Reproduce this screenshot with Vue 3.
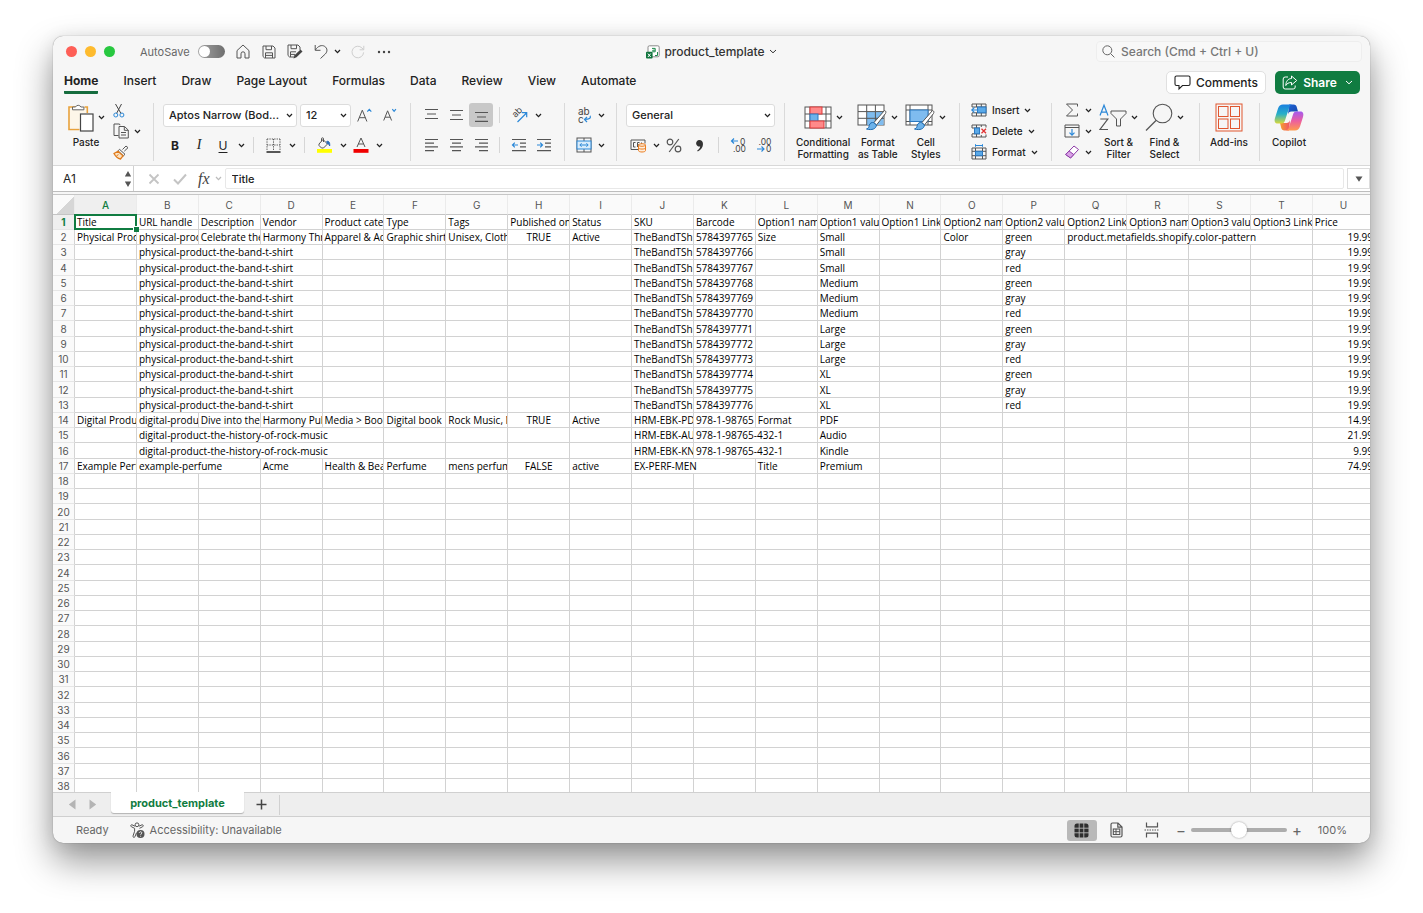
<script setup>
import { h, ref } from 'vue'

const glyphs = {
  home: [14, 15, '<path d="M1 6.6 7 1l6 5.6V14H9V9.8a2 2 0 0 0-4 0V14H1Z"/>'],
  save: [14, 14, '<path d="M1 1h10l2 2v10H2.6L1 11.5Z M4 1v3.7h5.5V1 M3.5 13V7.8h7V13 M3.5 10.4h7"/>'],
  saveAs: [16, 15, '<path d="M1 1h10l2 2v3 M7 13H2.6L1 11.5V1 M4 1v3.7h5.5V1 M3.5 13V7.8h5.5 M3.5 10.4H8"/><path d="m6.5 14.5 1-3.2 6-5.8 2 2-6 5.8Z" fill="#444" stroke="none"/>'],
  undo: [14, 15, '<path d="M1.2 1v5.3h5.3 M1.4 6C4 1.8 8 .6 10.7 2.4c3 2 2.8 5.4.6 7.6L6.5 14.5"/>'],
  redo: [14, 14, '<path d="M12.6 7.4A5.8 5.8 0 1 1 11 3l1.6 1.6 M12.8.8v4H8.6" stroke="#cfcfcf"/>'],
  dots: [14, 4, '<g fill="#444" stroke="none"><circle cx="2" cy="2" r="1.2"/><circle cx="7" cy="2" r="1.2"/><circle cx="12" cy="2" r="1.2"/></g>'],
  chev: [7, 5, '<path d="m1 1 2.5 2.6L6 1" stroke="currentColor" stroke-width="1.3"/>'],
  chevWide: [8, 5, '<path d="m1 1 3 2.8L7 1" stroke="currentColor"/>'],
  file: [14, 14, '<rect x="2" y=".8" width="11.2" height="11" rx="1.4" stroke="#8a8a8a" fill="#fff"/><path d="M6 3.400h3.200v3.400H6.800V5.200h2.400 M11.500 7v3.500H9" stroke="#1e8a4c"/><rect x="0" y="6.8" width="6.6" height="6.8" rx="1" fill="#10743d" stroke="none"/><path d="m1.9 8.6 2.8 3.4m0-3.4-2.8 3.4" stroke="#fff"/>'],
  search: [13, 13, '<circle cx="5.3" cy="5.3" r="4.5" stroke="#666"/><path d="m8.6 8.6 3.8 3.8" stroke="#666"/>'],
  comment: [17, 15, '<path d="M2.5 1h12A1.5 1.5 0 0 1 16 2.5v6.5a1.5 1.5 0 0 1-1.5 1.5H8.500L5 14v-3.5H2.500A1.5 1.5 0 0 1 1 9V2.500A1.5 1.5 0 0 1 2.500 1Z" stroke="#222" stroke-width="1.1"/>'],
  share: [16, 15, '<path d="M6 2H3.200A2 2 0 0 0 1.200 4v8a2 2 0 0 0 2 2h8a2 2 0 0 0 2-2v-1.500 M9.500 1l5.200 4.500L9.500 10V7.500C6.500 7.500 5 8.500 3.800 10.500 4 6 6 3.700 9.500 3.500Z" stroke="#fff"/>'],
  paste: [27, 29, '<path d="M9 4H2v22.500h10.500 M17.500 4h2.800v6" stroke="#e9a23b" stroke-width="1.6"/><path d="M3 5.200h16v5h-6v15H3z" fill="#fdf6e9" stroke="none"/><path d="M5.500 6.800V4h3a3 3 0 0 1 5.400 0h3v2.800Z" fill="#fff" stroke="#666"/><rect x="13.500" y="11" width="12.500" height="17" fill="#fff" stroke="#444" stroke-width="1.200"/>'],
  cut: [12, 15, '<path d="M2.500 1 8 10.500 M8.500 1 3.500 10.500" stroke="#444"/><circle cx="2.800" cy="12" r="2" stroke="#2b88d8"/><circle cx="8.900" cy="12" r="2" stroke="#2b88d8"/>'],
  copy: [16, 16, '<path d="M5.500 12.500H1V1h5.500l.5 1.200" /><path d="M6 3.500h5.500l3.800 3.600V15H6Z M11.300 3.700V7.300h3.800 M8 9.500h5 M8 12h5"/>'],
  brush: [16, 15, '<path d="M9.500 4.500 13 1l2 1.700-3.700 3.500 M6.500 4.300l5.500 5-1.600 1.500-5.400-5Z" /><path d="M5 6.200 1 8.500c1.500 2.800 4 5 6.500 5.500L10 10.800Z" fill="#fbe3c4" stroke="#e07b1c" stroke-width="1.300"/><path d="m3.500 10.800 2-1.200" stroke="#e07b1c"/>'],
  fontUp: [15, 15, '<path d="M.7 13.500 5.300 2.200l4.600 11.300M2.300 9.700h6"/><path d="m10.300 3.600 2-2.300 2 2.300" stroke="#2b88d8" stroke-width="1.200"/>'],
  fontDown: [14, 14, '<path d="M.7 12.500 4.600 2.800l4 9.700M2.100 9.200h5"/><path d="m9.300 1.200 1.800 2.200 1.800-2.200" stroke="#2b88d8" stroke-width="1.200"/>'],
  borders: [15, 15, '<path d="M1 1h13M1 1v12M14 1v12M7.500 1v12M1 7h13" stroke-dasharray="1.300 1.100"/><path d="M.5 14h14" stroke="#222" stroke-width="1.500"/>'],
  fill: [17, 16, '<path d="m7 2.500 4.500 4.500-4 4H5.500L3 8.500v-1.500Z M7.500 5V1.800a1 1 0 0 0-2 0v2.500"/><path d="M10.500 4.500c2.200-.8 3.500.5 3.200 4.500-.8-2-1.700-2.800-3-2.500" fill="#2b6cb8" stroke="#2b6cb8"/><rect x="1" y="12" width="15" height="3.800" fill="#ffff00" stroke="none"/>'],
  fontColor: [16, 16, '<path d="M4 10 8 1l4 9M5.300 7h5.300"/><rect x=".5" y="12" width="15" height="3.800" fill="#f00000" stroke="none"/>'],
  vTop: [15, 14, '<path d="M1 1.500h13M3 6h9M1 10.500h13" stroke-width="1.200"/>'],
  vMid: [15, 14, '<path d="M1 2.500h13M3 7h9M1 11.500h13" stroke-width="1.200"/>'],
  vBot: [15, 14, '<path d="M1 4.500h13M3 9h9M1 13.400h13" stroke-width="1.200"/>'],
  aLeft: [15, 14, '<path d="M1 1.500h13M1 5.200h9M1 8.900h13M1 12.600h9" stroke-width="1.200"/>'],
  aMid: [15, 14, '<path d="M1 1.500h13M3 5.200h9M1 8.900h13M3 12.600h9" stroke-width="1.200"/>'],
  aRight: [15, 14, '<path d="M1 1.500h13M5 5.200h9M1 8.900h13M5 12.600h9" stroke-width="1.200"/>'],
  orient: [17, 16, '<text transform="translate(4.500 11) rotate(-45)" font-size="9" stroke="none" fill="#444">ab</text><path d="M6.500 15 15.500 6M11 5.600h4.700v4.600" stroke="#2b88d8" stroke-width="1.200"/>'],
  outdent: [16, 14, '<path d="M1 1.500h14M9 5.200h6M9 8.900h6M1 12.600h14" stroke-width="1.200"/><path d="M7 7H1.500M3.800 4.700 1.500 7l2.300 2.300" stroke="#2b88d8" stroke-width="1.200"/>'],
  indent: [16, 14, '<path d="M1 1.500h14M9 5.200h6M9 8.900h6M1 12.600h14" stroke-width="1.200"/><path d="M1 7h5.500M4.200 4.700 6.500 7 4.200 9.300" stroke="#2b88d8" stroke-width="1.200"/>'],
  wrap: [15, 17, '<text x="1" y="8" font-size="10" stroke="none" fill="#444">ab</text><text x="1" y="15.500" font-size="10" stroke="none" fill="#444">c</text><path d="M13.200 8.800c.8 2.500-1 3.700-5.500 3.700M10 10l-2.500 2.500L10 15" stroke="#2b88d8" stroke-width="1.200"/>'],
  merge: [16, 16, '<rect x="1" y="1" width="14" height="14"/><path d="M8 1v3M8 12v3"/><rect x="1" y="4" width="14" height="8" fill="#d9ecfb" stroke="#2b88d8"/><path d="M4 8h8M5.600 6.200 3.800 8l1.800 1.800M10.400 6.200 12.200 8l-1.800 1.800" stroke="#2b88d8"/>'],
  currency: [17, 15, '<path d="M8 11.500H1V2h14v3.500"/><path d="M5.500 4.500H3.500v4.500h2M9.500 4.500H7.500v4.500M7 6.700h2.500M11.500 4.500v1.500"/><path d="M8.500 7v5.500c0 2 7 2 7 0V7" fill="#fdeedd" stroke="#ec7d20"/><ellipse cx="12" cy="7" rx="3.500" ry="1.300" fill="#fdeedd" stroke="#ec7d20"/><path d="M8.500 9.800c0 1.700 7 1.700 7 0" stroke="#ec7d20"/>'],
  percent: [16, 15, '<circle cx="4" cy="4" r="2.800" stroke-width="1.200"/><circle cx="12" cy="11" r="2.800" stroke-width="1.200"/><path d="M12.800 1 3.200 14" stroke-width="1.200"/>'],
  comma: [9, 13, '<path d="M4.300 1a3.300 3.300 0 1 0 .9 6.500C4.900 9.300 3.800 10.600 2.200 11.500l.6.900C6.200 10.900 8 8.300 8 5 8 2.500 6.400 1 4.300 1Z" fill="#333" stroke="none"/>'],
  moreDec: [17, 16, '<text x="10" y="7.500" font-size="8.500" stroke="none" fill="#444">0</text><text x="3" y="15" font-size="8.500" stroke="none" fill="#444">.00</text><path d="M8 4H1.500M4 1.500 1.500 4 4 6.500" stroke="#2b88d8" stroke-width="1.200"/>'],
  lessDec: [17, 16, '<text x="2.500" y="7.500" font-size="8.500" stroke="none" fill="#444">.00</text><text x="10" y="15" font-size="8.500" stroke="none" fill="#444">0</text><path d="M1 12h7M5.500 9.500 8 12l-2.500 2.500" stroke="#2b88d8" stroke-width="1.200"/>'],
  condFmt: [28, 23, '<rect x="1" y="1" width="26" height="21" fill="#fff"/><path d="M1 8h26M1 15h26M6 1v21M22 1v21"/><rect x="6" y="1" width="12" height="7" fill="#ff8a8a" stroke="#e03a3a"/><rect x="6" y="8" width="8" height="7" fill="#6cb2ea" stroke="#2b78c0"/><rect x="6" y="15" width="14" height="7" fill="#ff8a8a" stroke="#e03a3a"/>'],
  fmtTable: [30, 28, '<rect x="1" y="2" width="26" height="20" fill="#fff"/><rect x="10" y="9" width="16.500" height="13" fill="#7fbcef" stroke="none"/><path d="M1 8.600h26M1 15.300h26M9.700 2v20M18.400 2v20"/><path d="M27.500 7.500c1.500.5 1.700 1.700 1 3L19.500 22l-2.700-2.300Z" fill="#fff" /><path d="M16.800 19.700 19.500 22c-.5 4-4.500 5.500-10 4 2.200-.8 2.400-2 2.700-3.500.5-2.500 2.700-3.500 4.600-2.800Z" fill="#6cb2ea" stroke="#1b69b0"/>'],
  cellStyles: [30, 28, '<rect x="1" y="2" width="26" height="20" fill="#fff"/><path d="M1 7h26M1 18.500h26M5 2v20M23 2v20"/><rect x="5" y="7" width="18" height="11.500" fill="#7fbcef" stroke="#2b78c0"/><path d="M27.500 7.500c1.500.5 1.700 1.700 1 3L19.500 22l-2.700-2.300Z" fill="#fff"/><path d="M16.800 19.700 19.500 22c-.5 4-4.500 5.500-10 4 2.200-.8 2.400-2 2.700-3.500.5-2.500 2.700-3.500 4.600-2.800Z" fill="#6cb2ea" stroke="#1b69b0"/>'],
  insert: [16, 14, '<path d="M1 4V1h14v12H1v-3M1 4h14M1 9.800h14M5.500 1v3M10.300 1v3M5.500 10v3M10.300 10v3"/><rect x="6.500" y="4" width="8.500" height="5.800" fill="#5aa9e8" stroke="#2b78c0"/><path d="M7.500 7H.8M3.500 4.300.8 7l2.700 2.700" stroke="#2b88d8" stroke-width="1.200"/>'],
  delete: [16, 14, '<path d="M1 4V1h14v2.500M1 10v3h14v-2.500M1 4h8M1 9.800h8M5.500 1v3M10.300 1v2M5.500 10v3M10.300 11v2"/><rect x="3.500" y="4" width="5" height="5.800" fill="#5aa9e8" stroke="#2b78c0"/><path d="m10.500 4.800 4.500 4.500m0-4.500-4.500 4.500" stroke="#e03131" stroke-width="1.300"/>'],
  format: [16, 16, '<path d="M1 4h14v11H1ZM4.500 4v11M11.500 4v11M1 7.300h14M1 11.700h14"/><rect x="4.500" y="7.300" width="7" height="4.400" fill="#5aa9e8" stroke="#2b78c0"/><path d="M4.500 1.500h7M4.500.2v2.600M11.500.2v2.600" stroke="#2b88d8"/>'],
  sigma: [14, 14, '<path d="M12.500 3.500V1H1.500L7.500 7l-6 6h11v-2.500"/>'],
  fillDown: [16, 14, '<path d="M1 1h14v12H1ZM1 3.500h14"/><path d="M8 5v6M5.500 8.700 8 11.200l2.500-2.500" stroke="#2b88d8" stroke-width="1.200"/>'],
  eraser: [15, 14, '<path d="m9.500 1 4.500 3.500L6 13 1.200 9.500Z" fill="#fff" stroke="#8e3aa8"/><path d="M4.600 6 9.300 9.600 6 13 1.200 9.500Z" fill="#d9a3e6" stroke="#8e3aa8"/>'],
  sort: [28, 27, '<path d="M1 11.500 5 1.200l4 10.300M2.300 8.200h5.300" stroke="#2b88d8" stroke-width="1.200"/><path d="M1.300 15h7.500L1 25.500h8" stroke-width="1.200"/><path d="M12 7h15v2.500L21.500 15v7h-4v-7L12 9.500Z" />'],
  find: [28, 28, '<circle cx="17.500" cy="10.500" r="9.300" stroke-width="1.100"/><path d="M11 17.500 1 27.500" stroke-width="1.200"/>'],
  addins: [28, 29, '<g stroke="#e0562f"><rect x="1" y="1" width="26" height="27"/><rect x="3.500" y="3.500" width="9.500" height="10"/><rect x="15.500" y="3.500" width="9" height="10"/><rect x="3.500" y="16" width="9.500" height="9.500"/><rect x="15.500" y="16" width="9" height="9.500"/></g>'],
  copilot: [30, 27, `<defs>
    <linearGradient id="cpA" x1="0" y1="0" x2="0" y2="1"><stop offset="0" stop-color="#1a7fe0"/><stop offset=".5" stop-color="#27b0c8"/><stop offset="1" stop-color="#d8d83a"/></linearGradient>
    <linearGradient id="cpB" x1="0" y1="0" x2="0" y2="1"><stop offset="0" stop-color="#a45af0"/><stop offset=".5" stop-color="#ec5f9f"/><stop offset="1" stop-color="#ff9a4d"/></linearGradient>
    <linearGradient id="cpC" x1="0" y1="0" x2="1" y2="1"><stop offset="0" stop-color="#1f63d6"/><stop offset="1" stop-color="#1546a8"/></linearGradient>
    <linearGradient id="cpD" x1="0" y1="0" x2="1" y2="0"><stop offset="0" stop-color="#f5a12c"/><stop offset="1" stop-color="#f0506a"/></linearGradient></defs>
    <g stroke="none"><path d="M15 .5h4.500c2 0 2.800 1 3.300 2.800L24 7.500h-6.500c-2 0-3 1-3.500 3Z" fill="url(#cpC)"/><path d="M15 26.500h-4.500c-2 0-2.800-1-3.300-2.800L6 19h6.500c2 0 3-1 3.500-3Z" fill="url(#cpD)"/><path d="M9 .5h9c-1.500.4-2.200 1.300-2.800 3L11 16.500c-.6 2-1.500 3-3.500 3H3.800C1 19.500 0 17.500 1 14L4 4.500C4.900 1.800 6.500.5 9 .5Z" fill="url(#cpA)"/><path d="M21 26.500h-9c1.500-.4 2.200-1.300 2.800-3L19 10.500c.6-2 1.500-3 3.500-3h3.700c2.800 0 3.800 2 2.800 5.500l-3 9.500c-.9 2.700-2.500 4-5 4Z" fill="url(#cpB)"/></g>`],
  spin: [8, 18, '<path d="M4 1 7.200 6.500H.8ZM4 17 .8 11.500h6.400Z" fill="#555" stroke="none"/>'],
  cross: [12, 12, '<path d="m1.500 1.500 9 9m0-9-9 9" stroke="#c4c4c4" stroke-width="1.800"/>'],
  check: [14, 12, '<path d="m1 6.500 4 4L13 1.500" stroke="#c4c4c4" stroke-width="2"/>'],
  down: [8, 6, '<path d="M.5.500h7L4 5.800Z" fill="#555" stroke="none"/>'],
  left: [8, 11, '<path d="M7.500.5v10L.8 5.500Z" fill="#b4b4b4" stroke="none"/>'],
  right: [8, 11, '<path d="M.5.500v10l6.700-5Z" fill="#b4b4b4" stroke="none"/>'],
  plus: [11, 11, '<path d="M5.500 .5v10M.5 5.500h10" stroke="#444" stroke-width="1.500"/>'],
  access: [15, 17, '<circle cx="7" cy="2.800" r="1.900"/><path d="M5 4.200 2 2.800c-1.200-.3-1.800 1.300-.7 1.900L4.600 6.300v3L3 14c-.3 1.400 1.300 1.900 1.900.8l1.600-4M9 4.200l3-1.400c1.200-.3 1.800 1.300.7 1.900L9.500 6.300"/><circle cx="10.500" cy="12" r="4" fill="#555" stroke="none"/><path d="M9.300 11c0-1.700 2.600-1.600 2.500 0 0 .8-1.200.9-1.200 1.800M10.600 13.800v.8" stroke="#fff" stroke-width=".9"/>'],
  gridView: [15, 15, '<rect x=".5" y=".5" width="14" height="14" rx="2.500" fill="#2e2e2e" stroke="none"/><path d="M5.200 0v15M9.800 0v15M0 5.200h15M0 9.800h15" stroke="#b8b8b8" stroke-width=".9"/>'],
  pageView: [13, 16, '<path d="M1 2.500A1.500 1.500 0 0 1 2.500 1H8l4 4v8.500a1.500 1.500 0 0 1-1.500 1.500h-8A1.500 1.500 0 0 1 1 13.500ZM7.800 1v4.200H12" stroke-width="1.200"/><rect x="3.300" y="7" width="6.500" height="5.500" stroke-width="1.100"/><path d="M3.300 9.700h6.500M6 7v5.500"/>'],
  breakView: [16, 16, '<path d="M2.500.5v4.300h11V.5M2.500 15.500v-4.300h11v4.300" stroke-width="1.200"/><path d="M.5 8h15" stroke-dasharray="1.500 1"/>'],
}

const Ico = (props) => {
  const [w, ht, body] = glyphs[props.n]
  return h('svg', {
    width: w, height: ht, viewBox: `0 0 ${w} ${ht}`, fill: 'none', stroke: '#555',
    'aria-hidden': 'true', innerHTML: body,
  })
}
Ico.props = ['n']

const tabs = ['Home', 'Insert', 'Draw', 'Page Layout', 'Formulas', 'Data', 'Review', 'View', 'Automate']
const zoom = ref(50)
const cellName = ref('A1')
const formula = ref('Title')
const columns = 'ABCDEFGHIJKLMNOPQRSTU'.split('')

const shirt = 'physical-product-the-band-t-shirt'
const ebook = 'digital-product-the-history-of-rock-music'
const isbn = '978-1-98765-432-1'
const sizes = ['Small', 'Small', 'Small', 'Medium', 'Medium', 'Medium', 'Large', 'Large', 'Large', 'XL', 'XL', 'XL']
const colors = ['green', 'gray', 'red']

const data = {
  1: {
    A: 'Title', B: 'URL handle', C: 'Description', D: 'Vendor', E: 'Product cate', F: 'Type', G: 'Tags',
    H: 'Published on', I: 'Status', J: 'SKU', K: 'Barcode', L: 'Option1 nam', M: 'Option1 value',
    N: 'Option1 Linke', O: 'Option2 nam', P: 'Option2 value', Q: 'Option2 Linke', R: 'Option3 nam',
    S: 'Option3 value', T: 'Option3 Linke', U: 'Price',
  },
}
sizes.forEach((size, i) => {
  data[i + 2] = { B: shirt, J: 'TheBandTShi', K: String(5784397765 + i), M: size, P: colors[i % 3], U: '19.99' }
})
Object.assign(data[2], {
  A: 'Physical Prod', B: 'physical-prod', C: 'Celebrate the', D: 'Harmony Thre', E: 'Apparel & Acc', F: 'Graphic shirt',
  G: 'Unisex, Cloth', H: 'TRUE', I: 'Active', L: 'Size', O: 'Color', Q: 'product.metafields.shopify.color-pattern',
})
data[14] = {
  A: 'Digital Produ', B: 'digital-produc', C: 'Dive into the', D: 'Harmony Pub', E: 'Media > Book', F: 'Digital book',
  G: 'Rock Music, M', H: 'TRUE', I: 'Active', J: 'HRM-EBK-PD', K: '978-1-98765', L: 'Format', M: 'PDF', U: '14.99',
}
data[15] = { B: ebook, J: 'HRM-EBK-AU', K: isbn, M: 'Audio', U: '21.99' }
data[16] = { B: ebook, J: 'HRM-EBK-KN', K: isbn, M: 'Kindle', U: '9.99' }
data[17] = {
  A: 'Example Perf', B: 'example-perfume', D: 'Acme', E: 'Health & Bea', F: 'Perfume', G: 'mens perfum',
  H: 'FALSE', I: 'active', J: 'EX-PERF-MEN', L: 'Title', M: 'Premium', U: '74.99',
}

// Long text runs over the empty cells to its right.
const reach = { [shirt]: 3, [ebook]: 4, 'example-perfume': 2, 'EX-PERF-MEN': 2, [isbn]: 2, 'product.metafields.shopify.color-pattern': 4 }

const rows = Array.from({ length: 38 }, (_, i) => {
  const src = data[i + 1] || {}
  const cells = []
  for (let c = 0; c < columns.length;) {
    const text = src[columns[c]] || ''
    let span = 1
    while (span < (reach[text] || 1) && !src[columns[c + span]]) span++
    cells.push({ col: columns[c], text, span })
    c += span
  }
  return { n: i + 1, cells }
})
</script>

<template>
  <main class="desk">
    <div class="window">
      <header class="titlebar">
        <div class="quick">
          <span class="light red"></span><span class="light amber"></span><span class="light green"></span>
          <label class="autosave">AutoSave<input type="checkbox" role="switch" class="switch"></label>
          <button class="slot" aria-label="Home"><Ico n="home" /></button>
          <button class="slot" aria-label="Save"><Ico n="save" /></button>
          <button class="slot" aria-label="Save as"><Ico n="saveAs" /></button>
          <button class="slot" aria-label="Undo"><Ico n="undo" /></button>
          <button class="slot tiny" aria-label="Undo list"><Ico n="chev" /></button>
          <button class="slot" aria-label="Redo"><Ico n="redo" /></button>
          <button class="slot" aria-label="More"><Ico n="dots" /></button>
        </div>
        <button class="doc"><Ico n="file" /><span>product_template</span><Ico n="chevWide" /></button>
        <label class="search"><Ico n="search" /><input type="search" placeholder="Search (Cmd + Ctrl + U)" aria-label="Search"></label>
      </header>

      <div class="tabrow">
        <nav class="tabs">
          <button v-for="t in tabs" :key="t" class="tab" :class="{ on: t === 'Home' }">{{ t }}</button>
        </nav>
        <button class="pill comments"><Ico n="comment" />Comments</button>
        <button class="pill share"><Ico n="share" />Share<Ico n="chevWide" /></button>
      </div>

      <section class="ribbon">
        <div class="group clip">
          <button class="big"><span class="top"><Ico n="paste" /><Ico n="chev" /></span>Paste</button>
          <div class="stack">
            <button aria-label="Cut"><Ico n="cut" /></button>
            <button aria-label="Copy"><Ico n="copy" /><Ico n="chev" /></button>
            <button aria-label="Format painter"><Ico n="brush" /></button>
          </div>
        </div>

        <div class="group font">
          <div class="line">
            <span class="pick family"><select aria-label="Font"><option>Aptos Narrow (Bod...</option></select><Ico n="chev" /></span>
            <span class="pick size"><select aria-label="Font size"><option>12</option></select><Ico n="chev" /></span>
            <button class="w26" aria-label="Grow font"><Ico n="fontUp" /></button>
            <button class="w26" aria-label="Shrink font"><Ico n="fontDown" /></button>
          </div>
          <div class="line">
            <button class="w24 b">B</button>
            <button class="w24 i">I</button>
            <button class="w24 u">U</button>
            <button class="w12" aria-label="Underline styles"><Ico n="chev" /></button>
            <i class="rule"></i>
            <button class="w26" aria-label="Borders"><Ico n="borders" /></button>
            <button class="w12" aria-label="Border styles"><Ico n="chev" /></button>
            <i class="rule"></i>
            <button class="w26" aria-label="Fill colour"><Ico n="fill" /></button>
            <button class="w12" aria-label="Fill colours"><Ico n="chev" /></button>
            <button class="w24" aria-label="Font colour"><Ico n="fontColor" /></button>
            <button class="w12" aria-label="Font colours"><Ico n="chev" /></button>
          </div>
        </div>

        <div class="group align">
          <div class="line">
            <button class="w24" aria-label="Top align"><Ico n="vTop" /></button>
            <button class="w26" aria-label="Middle align"><Ico n="vMid" /></button>
            <button class="w24 pressed" aria-label="Bottom align"><Ico n="vBot" /></button>
            <i class="rule"></i>
            <button class="w26" aria-label="Orientation"><Ico n="orient" /></button>
            <button class="w12" aria-label="Orientations"><Ico n="chev" /></button>
          </div>
          <div class="line">
            <button class="w24" aria-label="Align left"><Ico n="aLeft" /></button>
            <button class="w26" aria-label="Centre"><Ico n="aMid" /></button>
            <button class="w24" aria-label="Align right"><Ico n="aRight" /></button>
            <i class="rule"></i>
            <button class="w26" aria-label="Decrease indent"><Ico n="outdent" /></button>
            <button class="w24" aria-label="Increase indent"><Ico n="indent" /></button>
          </div>
        </div>

        <div class="group wraps">
          <div class="line"><button class="w22" aria-label="Wrap text"><Ico n="wrap" /></button><button class="w12" aria-label="Wrap options"><Ico n="chev" /></button></div>
          <div class="line"><button class="w22" aria-label="Merge cells"><Ico n="merge" /></button><button class="w12" aria-label="Merge options"><Ico n="chev" /></button></div>
        </div>

        <div class="group number">
          <div class="line"><span class="pick kind"><select aria-label="Number format"><option>General</option></select><Ico n="chev" /></span></div>
          <div class="line">
            <button class="w24" aria-label="Currency"><Ico n="currency" /></button>
            <button class="w12" aria-label="Currencies"><Ico n="chev" /></button>
            <button class="w24" aria-label="Percent"><Ico n="percent" /></button>
            <button class="w26" aria-label="Comma style"><Ico n="comma" /></button>
            <i class="rule"></i>
            <button class="w26" aria-label="Increase decimal"><Ico n="moreDec" /></button>
            <button class="w26" aria-label="Decrease decimal"><Ico n="lessDec" /></button>
          </div>
        </div>

        <div class="group styles">
          <button class="big"><span class="top"><Ico n="condFmt" /><Ico n="chev" /></span>Conditional<br>Formatting</button>
          <button class="big"><span class="top"><Ico n="fmtTable" /><Ico n="chev" /></span>Format<br>as Table</button>
          <button class="big"><span class="top"><Ico n="cellStyles" /><Ico n="chev" /></span>Cell<br>Styles</button>
        </div>

        <div class="group cells">
          <div class="stack">
            <button><Ico n="insert" />Insert<Ico n="chev" /></button>
            <button><Ico n="delete" />Delete<Ico n="chev" /></button>
            <button><Ico n="format" />Format<Ico n="chev" /></button>
          </div>
        </div>

        <div class="group edit">
          <div class="stack">
            <button aria-label="AutoSum"><Ico n="sigma" /><Ico n="chev" /></button>
            <button aria-label="Fill"><Ico n="fillDown" /><Ico n="chev" /></button>
            <button aria-label="Clear"><Ico n="eraser" /><Ico n="chev" /></button>
          </div>
          <button class="big"><span class="top"><Ico n="sort" /><Ico n="chev" /></span>Sort &amp;<br>Filter</button>
          <button class="big"><span class="top"><Ico n="find" /><Ico n="chev" /></span>Find &amp;<br>Select</button>
        </div>

        <div class="group addins"><button class="big"><span class="top"><Ico n="addins" /></span>Add-ins</button></div>
        <div class="group last"><button class="big"><span class="top"><Ico n="copilot" /></span>Copilot</button></div>
      </section>

      <section class="formula">
        <div class="namebox"><input v-model="cellName" aria-label="Name box"><Ico n="spin" /></div>
        <button class="w26" aria-label="Cancel"><Ico n="cross" /></button>
        <button class="w26" aria-label="Enter"><Ico n="check" /></button>
        <button class="fx" aria-label="Insert function">fx<Ico n="chev" /></button>
        <input v-model="formula" class="entry" aria-label="Formula bar">
        <button class="expand" aria-label="Expand formula bar"><Ico n="down" /></button>
      </section>

      <section class="sheet">
        <table>
          <colgroup><col class="numcol"><col v-for="c in columns" :key="c"></colgroup>
          <thead>
            <tr>
              <th class="corner"></th>
              <th v-for="c in columns" :key="c" :class="{ hot: c === 'A' }" scope="col">{{ c }}</th>
            </tr>
          </thead>
          <tbody>
            <tr v-for="r in rows" :key="r.n">
              <th scope="row" :class="{ hot: r.n === 1 }">{{ r.n }}</th>
              <td
                v-for="c in r.cells" :key="c.col" :colspan="c.span"
                :class="{ sel: r.n === 1 && c.col === 'A', mid: c.col === 'H' && r.n > 1, num: c.col === 'U' && r.n > 1 }"
              ><div>{{ c.text }}</div></td>
            </tr>
          </tbody>
        </table>
      </section>

      <section class="sheets">
        <button class="nav" aria-label="Previous sheet"><Ico n="left" /></button>
        <button class="nav" aria-label="Next sheet"><Ico n="right" /></button>
        <button class="sheet-tab">product_template</button>
        <button class="add" aria-label="Add sheet"><Ico n="plus" /></button>
      </section>

      <footer class="status">
        <span class="ready">Ready</span>
        <button class="acc"><Ico n="access" />Accessibility: Unavailable</button>
        <button class="view on" aria-label="Normal view"><Ico n="gridView" /></button>
        <button class="view" aria-label="Page layout view"><Ico n="pageView" /></button>
        <button class="view" aria-label="Page break view"><Ico n="breakView" /></button>
        <button class="step" aria-label="Zoom out">−</button>
        <input v-model="zoom" type="range" min="0" max="100" aria-label="Zoom">
        <button class="step" aria-label="Zoom in">+</button>
        <span class="pct">100%</span>
      </footer>
    </div>
  </main>
</template>

<style>
body { background: #fff; }
</style>

<style scoped>
.desk {
  box-sizing: border-box;
  height: 100vh;
  padding: 36px 53px 70px;
  overflow: hidden;
  font-family: Inter, "Liberation Sans", sans-serif;
  font-size: 11px;
  color: #222;
}
.desk * { box-sizing: border-box; }
button, input, select { font: inherit; color: inherit; border: 0; background: none; padding: 0; margin: 0; outline: 0; }
button { display: inline-flex; align-items: center; justify-content: center; white-space: nowrap; }
svg { display: block; flex: none; overflow: visible; }

.window {
  height: 100%;
  display: flex;
  flex-direction: column;
  border-radius: 10px;
  overflow: hidden;
  background: #f6f6f6;
  box-shadow: 0 0 1px rgba(0, 0, 0, .5), 0 18px 36px rgba(0, 0, 0, .42), 0 2px 18px rgba(0, 0, 0, .08);
}

.titlebar { display: grid; grid-template-columns: 1fr auto 1fr; align-items: center; height: 31px; flex: none; }
.quick { display: flex; align-items: center; padding-left: 13px; }
.light { width: 11px; height: 11px; border-radius: 50%; margin-right: 8px; }
.red { background: #fe5f57; }
.amber { background: #febb2e; }
.green { background: #28c840; }
.autosave { display: flex; align-items: center; gap: 8px; margin: 0 5px 0 17px; color: #666; }
.switch { appearance: none; width: 27px; height: 13px; border-radius: 7px; background: linear-gradient(90deg, #a4a4a4, #6e6e6e); display: flex; align-items: center; padding: 1px; }
.switch::before { content: ""; width: 11px; height: 11px; border-radius: 50%; background: #fff; }
.slot { width: 26px; height: 24px; }
.slot.tiny { width: 8px; margin-right: 3px; }
.doc { gap: 4px; font-size: 12px; font-weight: 500; color: #333; }
.search { justify-self: end; display: flex; align-items: center; gap: 6px; width: 266px; height: 21px; margin-right: 8px; padding-left: 5px; border: 1px solid #eee; border-radius: 4px; background: #f8f8f8; }
.search input { flex: 1; min-width: 0; font-size: 12px; font-weight: 500; }
.search input::placeholder { color: #777; opacity: 1; }

.tabrow { display: flex; align-items: center; height: 30px; flex: none; padding: 0 10px 0 11px; }
.tabs { display: flex; gap: 25px; margin-right: auto; }
.tab { height: 24px; padding-bottom: 1px; font-size: 12px; font-weight: 500; border: 0 solid transparent; border-width: 0 0 3px; }
.tab.on { font-weight: 700; border-color: #156c3e; border-radius: 1px; }
.pill { height: 23px; border-radius: 5px; font-size: 12px; font-weight: 500; }
.comments { gap: 5px; width: 100px; background: #fff; border: 1px solid #e0e0e0; margin-right: 9px; }
.share { gap: 5px; width: 85px; background: #107c41; color: #fff; font-weight: 600; }
.share svg:last-child { margin-left: 3px; }

.ribbon { display: flex; height: 69px; flex: none; padding: 6px 0 4px; border-bottom: 1px solid #d8d8d8; }
.group { flex: none; border-right: 1px solid #dadada; }
.line { display: flex; align-items: center; height: 24px; }
.line + .line { margin-top: 6px; }
.w12 { width: 12px; height: 24px; }
.w22 { width: 22px; height: 24px; }
.w24 { width: 24px; height: 24px; }
.w26 { width: 26px; height: 24px; }
.rule { width: 1px; height: 16px; margin: 0 6px; background: #d6d6d6; }
.big { display: flex; flex-direction: column; justify-content: flex-start; font-size: 10px; line-height: 12px; font-weight: 500; text-align: center; }
.top { display: flex; align-items: center; justify-content: center; gap: 4px; height: 28px; margin-bottom: 5px; }
.stack { display: flex; flex-direction: column; height: 56px; justify-content: space-between; align-items: flex-start; }
.stack button { height: 14px; gap: 5px; }
.clip { display: flex; gap: 8px; width: 101px; padding-left: 14px; }
.font { width: 257px; padding-left: 9px; }
.align { width: 154px; padding-left: 8px; }
.wraps { width: 52px; padding-left: 8px; }
.number { width: 168px; padding-left: 9px; }
.styles { display: flex; gap: 7px; width: 175px; padding-left: 11px; }
.cells { width: 92px; padding-left: 11px; }
.cells .stack button { font-size: 10px; font-weight: 500; }
.edit { display: flex; gap: 7px; width: 148px; padding-left: 12px; }
.edit .stack svg:first-child { width: 16px; }
.addins { width: 60px; padding-left: 10px; }
.last { padding-left: 12px; border: 0; }
.pressed { background: #c8c8c8; border-radius: 3px; }
.b { font-size: 12px; font-weight: 700; }
.i { font: italic 14px "Liberation Serif", serif; }
.u { font-size: 12px; text-decoration: underline; text-underline-offset: 2px; }
.pick { display: flex; align-items: center; height: 23px; background: #fff; border: 1px solid #dcdcdc; border-radius: 3px; padding-right: 3px; }
.pick select { appearance: none; flex: 1; min-width: 0; height: 21px; padding-left: 5px; font-weight: 500; }
.family { width: 134px; margin-right: 3px; }
.size { width: 51px; }
.kind { width: 149px; }

.formula { display: flex; align-items: center; height: 26px; flex: none; background: #fff; border-bottom: 1px solid #bdbdbd; font-size: 12px; }
.namebox { display: flex; align-items: center; width: 81px; height: 25px; padding: 0 1px 0 10px; border-right: 1px solid #d0d0d0; margin-right: 7px; }
.namebox input { flex: 1; min-width: 0; }
.fx { gap: 5px; padding-left: 5px; font: italic 16px "Liberation Serif", serif; color: #444; }
.fx svg { color: #bbb; }
.entry { flex: 1; min-width: 0; height: 21px; margin: 0 3px; padding-left: 6px; font-size: 11px; font-weight: 500; border: 1px solid #e8e8e8; border-radius: 2px; }
.expand { width: 23px; height: 21px; border: 1px solid #ddd; }

.sheet { flex: 1; min-height: 0; overflow: hidden; background: #fff; border-top: 1px solid #c6c6c6; margin-top: 2px; }
table { table-layout: fixed; width: calc(100% + 5px); border-collapse: separate; border-spacing: 0; }
.numcol { width: 22px; }
th { padding: 0; font-weight: 400; color: #555; background: #fafafa; border: 0 solid #d4d4d4; border-width: 0 1px 1px 0; }
thead th { height: 20px; font-size: 10px; border-right-color: #ebebeb; border-bottom-color: #c4c4c4; }
tbody th { height: 15px; font-size: 10px; line-height: 14px; border-bottom-color: #e6e6e6; }
thead .hot { background: #efefef; color: #107c41; font-weight: 500; border-bottom-color: #107c41; }
tbody .hot { background: #efefef; color: #107c41; font-weight: 700; }
tbody tr:nth-child(4n) th { height: 16px; }
.corner { background: linear-gradient(135deg, #fafafa 55%, #d6d6d6 55%); }
td { padding: 0; height: 15px; border: 0 solid #d2d2d2; border-width: 0 1px 1px 0; font-family: "Open Sans", "Noto Sans", sans-serif; font-size: 10px; line-height: 14px; color: #000; }
td div { height: 14px; padding-left: 2px; overflow: hidden; white-space: nowrap; }
.mid div { text-align: center; padding: 0; }
.num div { text-align: right; padding-right: 1px; }
.sel { position: relative; }
.sel::before { content: ""; position: absolute; inset: -1px; border: 2px solid #107c41; }
.sel::after { content: ""; position: absolute; right: -3px; bottom: -3px; width: 5px; height: 5px; background: #107c41; border: 0 solid #fff; border-width: 1px 0 0 1px; }

.sheets { display: flex; align-items: center; height: 25px; flex: none; padding-left: 8px; background: #eee; border-top: 1px solid #d0d0d0; border-bottom: 1px solid #cfcfcf; }
.nav { width: 21px; height: 22px; }
.sheet-tab { align-self: flex-start; width: 133px; height: 21px; margin: -1px 0 0 8px; background: #fff; color: #107c41; font-weight: 700; border-radius: 0 0 3px 3px; box-shadow: 0 1px 1px rgba(0, 0, 0, .25); }
.add { width: 36px; height: 20px; border-right: 1px solid #d0d0d0; }

.status { display: flex; align-items: center; height: 26px; flex: none; padding: 0 23px; color: #666; }
.acc { gap: 5px; margin-left: 21px; margin-right: auto; }
.view { width: 30px; height: 21px; border-radius: 3px; margin-right: 5px; }
.view.on { background: #b9b9b9; }
.step { width: 18px; font-size: 15px; }
input[type="range"] { appearance: none; width: 96px; height: 16px; margin: 0 1px; }
input[type="range"]::-webkit-slider-runnable-track { height: 4px; border-radius: 2px; background: #adadad; }
input[type="range"]::-webkit-slider-thumb { appearance: none; width: 16px; height: 16px; margin-top: -6px; border-radius: 50%; background: #fff; box-shadow: 0 0 2px rgba(0, 0, 0, .4); }
.pct { margin-left: 12px; }
</style>
